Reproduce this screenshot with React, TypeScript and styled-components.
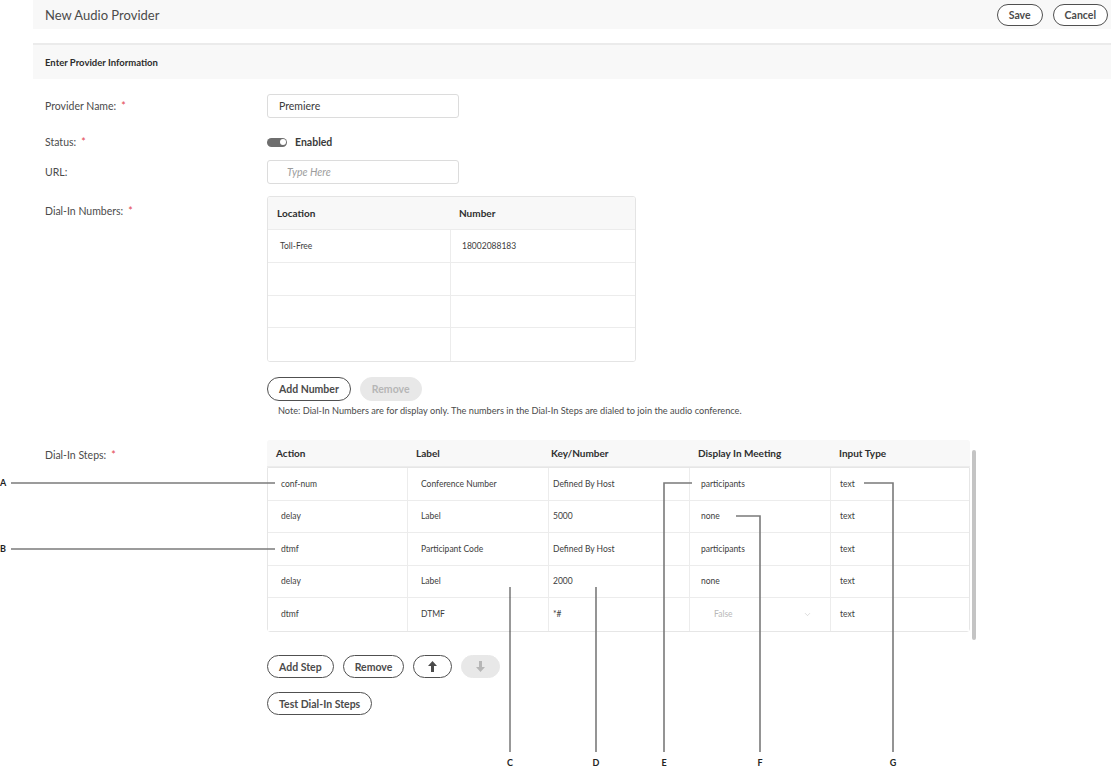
import React from "react";
import styled, { createGlobalStyle } from "styled-components";
import { ChevronDown } from "lucide-react";

const GlobalStyle = createGlobalStyle`
  html, body {
    margin: 0;
    padding: 0;
    background: #fff;
  }
  body {
    font-family: Lato, "Open Sans", sans-serif;
    color: #4b4b4b;
    overflow: hidden;
  }
  * {
    box-sizing: border-box;
  }
`;

const Page = styled.div`
  position: relative;
  width: 1111px;
  height: 770px;
  padding-left: 33px;
`;

const TopBar = styled.header`
  display: flex;
  align-items: center;
  justify-content: space-between;
  height: 29px;
  padding: 0 3px 0 12px;
  background: #f8f8f8;
`;

const Title = styled.h1`
  margin: 0;
  font-size: 13px;
  font-weight: 400;
  color: #4b4b4b;
`;

const ButtonGroup = styled.div<{ $gap?: number; $top?: number }>`
  display: flex;
  align-items: center;
  gap: ${(p) => p.$gap ?? 10}px;
  margin-top: ${(p) => p.$top ?? 0}px;
`;

const PillButton = styled.button<{ $h?: number; $wide?: boolean }>`
  height: ${(p) => p.$h ?? 23}px;
  padding: 0 ${(p) => (p.$wide ? 14 : 11)}px;
  border: 1.5px solid #505050;
  border-radius: 13px;
  background: #fff;
  color: #4b4b4b;
  font-family: Lato, "Open Sans", sans-serif;
  font-size: 10.5px;
  font-weight: 700;
  display: inline-flex;
  align-items: center;
  justify-content: center;
  cursor: pointer;

  &:disabled {
    border-color: #e8e8e8;
    background: #e8e8e8;
    color: #b6b6b6;
    cursor: default;
  }
`;

const SectionBand = styled.div`
  margin-top: 14px;
  border-top: 2px solid #ebebeb;
  height: 36px;
  display: flex;
  align-items: center;
  padding-left: 12px;
  background: #f8f8f8;
  font-size: 9.5px;
  font-weight: 700;
  color: #2c2c2c;
`;

const Form = styled.div`
  padding-left: 12px;
`;

const FieldRow = styled.div<{ $top: number; $start?: boolean }>`
  display: grid;
  grid-template-columns: 222px auto;
  align-items: ${(p) => (p.$start ? "start" : "center")};
  margin-top: ${(p) => p.$top}px;
`;

const Label = styled.div<{ $pad?: number }>`
  font-size: 10.5px;
  line-height: 13px;
  padding-top: ${(p) => p.$pad ?? 0}px;
  color: #4b4b4b;
`;

const Required = styled.span`
  color: #e34850;
  margin-left: 5px;
`;

const TextInput = styled.input<{ $indent?: number }>`
  width: 192px;
  height: 24px;
  border: 1px solid #dcdcdc;
  border-radius: 3px;
  padding: 0 0 0 ${(p) => p.$indent ?? 11}px;
  font-family: Lato, "Open Sans", sans-serif;
  font-size: 10.5px;
  color: #3a3a3a;
  outline: none;

  &::placeholder {
    font-style: italic;
    color: #9c9c9c;
  }
`;

const ToggleLine = styled.div`
  display: flex;
  align-items: center;
  gap: 8px;
  height: 24px;
  font-size: 10.5px;
  font-weight: 700;
  color: #3a3a3a;
`;

const Track = styled.span`
  position: relative;
  width: 20px;
  height: 9px;
  border-radius: 5px;
  background: #6e6e6e;

  &::after {
    content: "";
    position: absolute;
    right: 1.5px;
    top: 1.5px;
    width: 6px;
    height: 6px;
    border-radius: 50%;
    background: #fff;
  }
`;

const FieldColumn = styled.div`
  display: flex;
  flex-direction: column;
  align-items: flex-start;
`;

const Table = styled.div<{ $bordered?: boolean }>`
  display: flex;
  flex-direction: column;
  border: ${(p) => (p.$bordered ? "1px solid #e4e4e4" : "none")};
  border-radius: 3px;
  overflow: hidden;
`;

const TableBody = styled.div`
  border: 1px solid #e6e6e6;
  border-radius: 0 0 3px 3px;
`;

const Row = styled.div<{ $cols: string; $h: number; $head?: boolean }>`
  display: grid;
  grid-template-columns: ${(p) => p.$cols};
  height: ${(p) => p.$h}px;
  background: ${(p) => (p.$head ? "#f8f8f8" : "#fff")};
  border-bottom: 1px solid #ececec;

  &:last-child {
    border-bottom: ${(p) => (p.$head ? "1px solid #ececec" : "none")};
  }
`;

const Cell = styled.div<{ $pad: number; $head?: boolean }>`
  display: flex;
  align-items: center;
  padding-left: ${(p) => p.$pad}px;
  font-size: ${(p) => (p.$head ? "10px" : "8.5px")};
  font-weight: ${(p) => (p.$head ? 700 : 400)};
  color: ${(p) => (p.$head ? "#2f2f2f" : "#3d3d3d")};
  border-right: ${(p) => (p.$head ? "none" : "1px solid #ececec")};
  white-space: nowrap;

  &:last-child {
    border-right: none;
  }
`;

const SelectCell = styled(Cell)`
  justify-content: space-between;
  padding-right: 18px;
  color: #b8b8b8;
`;

const Note = styled.p`
  margin: 4px 0 0 11px;
  font-size: 9.2px;
  line-height: 12px;
  color: #4b4b4b;
`;

const StepsArea = styled.div`
  display: flex;
  align-items: flex-start;
  gap: 2px;
`;

const ScrollThumb = styled.div`
  width: 4px;
  height: 190px;
  margin-top: 10px;
  border-radius: 2px;
  background: #c4c4c4;
`;

const ButtonStack = styled.div`
  display: flex;
  flex-direction: column;
  align-items: flex-start;
  gap: 14px;
  margin-top: 15px;
`;

const ArrowSvg = styled.svg`
  display: block;
`;

const Callouts = styled.svg`
  position: absolute;
  left: 0;
  top: 0;
  pointer-events: none;
  font-family: Lato, "Open Sans", sans-serif;
`;

const Arrow = ({ down }: { down?: boolean }) => (
  <ArrowSvg width="9" height="11" viewBox="0 0 9 11">
    <path
      d={down ? "M4.5 11 L9 6 H6 V0 H3 V6 H0 Z" : "M4.5 0 L9 5 H6 V11 H3 V5 H0 Z"}
      fill="currentColor"
    />
  </ArrowSvg>
);

const numberCols = [
  { title: "Location", w: 183, hp: 9, bp: 12 },
  { title: "Number", w: 184, hp: 8, bp: 11 },
];

const numberRows = [["Toll-Free", "18002088183"], ["", ""], ["", ""], ["", ""]];

const stepCols = [
  { title: "Action", w: 140, hp: 9, bp: 13 },
  { title: "Label", w: 141, hp: 9, bp: 13 },
  { title: "Key/Number", w: 141, hp: 3, bp: 4 },
  { title: "Display In Meeting", w: 141, hp: 9, bp: 11 },
  { title: "Input Type", w: 138, hp: 9, bp: 9 },
];

const stepRows = [
  ["conf-num", "Conference Number", "Defined By Host", "participants", "text"],
  ["delay", "Label", "5000", "none", "text"],
  ["dtmf", "Participant Code", "Defined By Host", "participants", "text"],
  ["delay", "Label", "2000", "none", "text"],
  ["dtmf", "DTMF", "*#", null, "text"],
];

const template = (cols: { w: number }[]) => cols.map((c) => `${c.w}px`).join(" ");

const lines = [
  { d: "M11 483 H275", dark: false },
  { d: "M11 549 H275", dark: false },
  { d: "M510 587 V752", dark: true },
  { d: "M596 587 V752", dark: false },
  { d: "M692 483 H664 V752", dark: false },
  { d: "M736 516 H760 V752", dark: false },
  { d: "M864 483 H893 V752", dark: false },
];

const letters = [
  { t: "A", x: 3, y: 486 },
  { t: "B", x: 3, y: 552 },
  { t: "C", x: 510, y: 766 },
  { t: "D", x: 596, y: 766 },
  { t: "E", x: 664, y: 766 },
  { t: "F", x: 760, y: 766 },
  { t: "G", x: 893, y: 766 },
];

export default function App() {
  return (
    <Page>
      <GlobalStyle />
      <TopBar>
        <Title>New Audio Provider</Title>
        <ButtonGroup>
          <PillButton $h={22}>Save</PillButton>
          <PillButton $h={22}>Cancel</PillButton>
        </ButtonGroup>
      </TopBar>

      <SectionBand>Enter Provider Information</SectionBand>

      <Form>
        <FieldRow $top={15}>
          <Label>
            Provider Name:<Required>*</Required>
          </Label>
          <TextInput defaultValue="Premiere" />
        </FieldRow>

        <FieldRow $top={12}>
          <Label>
            Status:<Required>*</Required>
          </Label>
          <ToggleLine>
            <Track />
            Enabled
          </ToggleLine>
        </FieldRow>

        <FieldRow $top={6}>
          <Label>URL:</Label>
          <TextInput $indent={19} placeholder="Type Here" />
        </FieldRow>

        <FieldRow $top={12} $start>
          <Label $pad={9}>
            Dial-In Numbers:<Required>*</Required>
          </Label>
          <FieldColumn>
            <Table $bordered>
              <Row $cols={template(numberCols)} $h={33} $head>
                {numberCols.map((c) => (
                  <Cell key={c.title} $pad={c.hp} $head>
                    {c.title}
                  </Cell>
                ))}
              </Row>
              {numberRows.map((r, i) => (
                <Row key={i} $cols={template(numberCols)} $h={32.75}>
                  {r.map((v, j) => (
                    <Cell key={j} $pad={numberCols[j].bp}>
                      {v}
                    </Cell>
                  ))}
                </Row>
              ))}
            </Table>
            <ButtonGroup $gap={9} $top={15}>
              <PillButton $h={24}>Add Number</PillButton>
              <PillButton $h={24} disabled>
                Remove
              </PillButton>
            </ButtonGroup>
            <Note>
              Note: Dial-In Numbers are for display only. The numbers in the Dial-In Steps are
              dialed to join the audio conference.
            </Note>
          </FieldColumn>
        </FieldRow>

        <FieldRow $top={23} $start>
          <Label $pad={9}>
            Dial-In Steps:<Required>*</Required>
          </Label>
          <FieldColumn>
            <StepsArea>
              <Table>
                <Row $cols={template(stepCols)} $h={27} $head>
                  {stepCols.map((c) => (
                    <Cell key={c.title} $pad={c.hp} $head>
                      {c.title}
                    </Cell>
                  ))}
                </Row>
                <TableBody>
                  {stepRows.map((r, i) => (
                    <Row key={i} $cols={template(stepCols)} $h={32.5}>
                      {r.map((v, j) =>
                        v === null ? (
                          <SelectCell key={j} $pad={24}>
                            False
                            <ChevronDown size={9} strokeWidth={1.5} color="#c2c2c2" />
                          </SelectCell>
                        ) : (
                          <Cell key={j} $pad={stepCols[j].bp}>
                            {v}
                          </Cell>
                        )
                      )}
                    </Row>
                  ))}
                </TableBody>
              </Table>
              <ScrollThumb />
            </StepsArea>
            <ButtonStack>
              <ButtonGroup $gap={9}>
                <PillButton>Add Step</PillButton>
                <PillButton>Remove</PillButton>
                <PillButton $wide>
                  <Arrow />
                </PillButton>
                <PillButton $wide disabled>
                  <Arrow down />
                </PillButton>
              </ButtonGroup>
              <PillButton>Test Dial-In Steps</PillButton>
            </ButtonStack>
          </FieldColumn>
        </FieldRow>
      </Form>

      <Callouts width="1111" height="770" viewBox="0 0 1111 770">
        {lines.map((l, i) => (
          <path
            key={i}
            d={l.d}
            fill="none"
            stroke={l.dark ? "#333" : "#7a7a7a"}
            strokeWidth={l.dark ? 1 : 1.6}
          />
        ))}
        {letters.map((l) => (
          <text
            key={l.t}
            x={l.x}
            y={l.y}
            textAnchor="middle"
            fontSize="9"
            fontWeight="700"
            fill="#222"
          >
            {l.t}
          </text>
        ))}
      </Callouts>
    </Page>
  );
}
